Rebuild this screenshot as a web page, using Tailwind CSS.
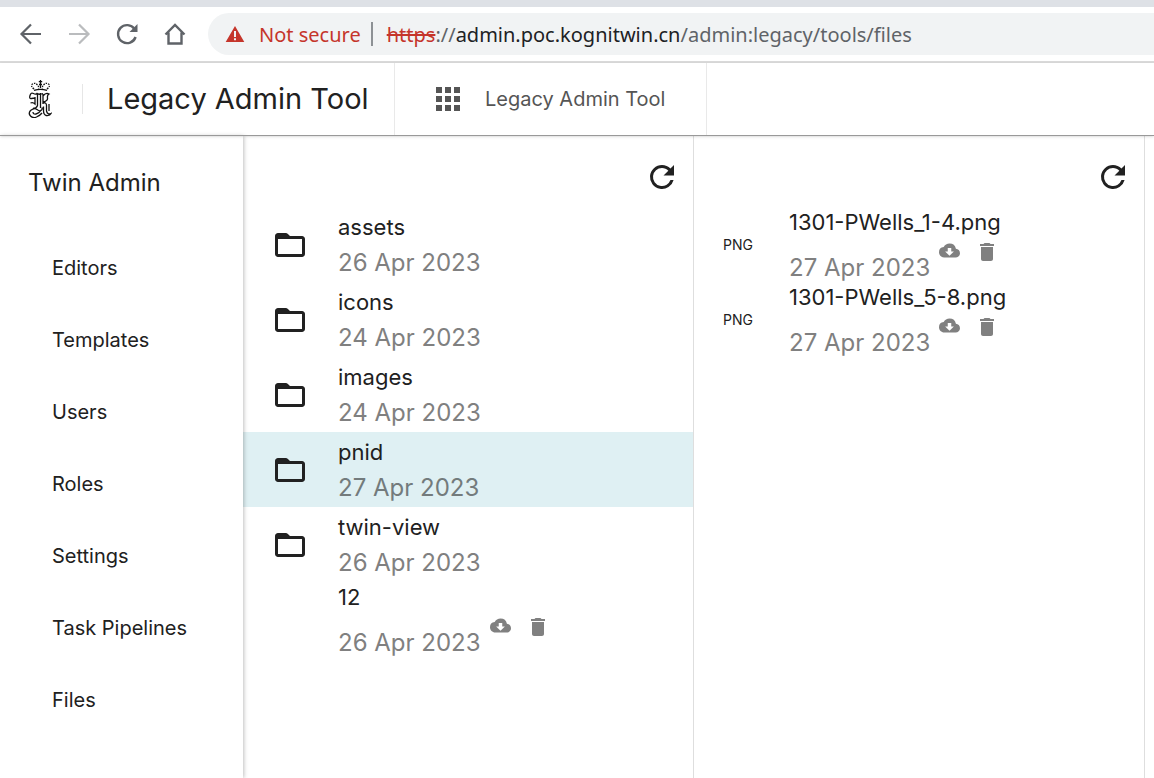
<!DOCTYPE html>
<html lang="en">
<head>
<meta charset="utf-8">
<title>Legacy Admin Tool</title>
<script src="https://cdn.jsdelivr.net/npm/@tailwindcss/browser@4"></script>
</head>
<body class="flex h-screen flex-col overflow-hidden bg-white font-['Inter',sans-serif] text-[#212121]">
<svg class="hidden" aria-hidden="true">
  <symbol id="folder" viewBox="0 0 24 24"><path fill="currentColor" d="M20 18H4V8h16m0-2h-8l-1.400-1.400C10.200 4.200 9.700 4 9.200 4H4c-1.100 0-2 .9-2 2v12c0 1.100.9 2 2 2h16c1.100 0 2-.9 2-2V8c0-1.100-.9-2-2-2z"/><path fill="currentColor" d="M3 5h7l2 2.500H3z"/></symbol>
  <symbol id="refresh" viewBox="0 0 24 24"><path fill="currentColor" d="M17.650 6.350A7.958 7.958 0 0 0 12 4a8 8 0 1 0 7.730 10h-2.080A6 6 0 1 1 12 6c1.660 0 3.140.69 4.220 1.780L13 11h7V4z"/></symbol>
  <symbol id="cloud" viewBox="0 0 24 24"><path fill="currentColor" d="M19.350 10.040A7.490 7.490 0 0 0 12 4C9.110 4 6.600 5.640 5.350 8.040A5.994 5.994 0 0 0 0 14c0 3.310 2.690 6 6 6h13c2.760 0 5-2.240 5-5 0-2.640-2.050-4.780-4.650-4.960zM17 13l-5 5-5-5h3V9h4v4z"/></symbol>
  <symbol id="trash" viewBox="0 0 24 24"><path fill="currentColor" d="M6 19c0 1.100.9 2 2 2h8c1.100 0 2-.9 2-2V7H6zM19 4h-3.500l-1-1h-5l-1 1H5v2h14z"/></symbol>
</svg>

<div class="h-[7px] shrink-0 bg-[#dee1e6]"></div>
<div class="flex h-[56px] shrink-0 items-center border-b-2 border-[#dadada] pl-[19px] text-[#5f6368]">
  <nav class="flex items-center gap-6" aria-label="Browser">
    <button aria-label="Back"><svg class="size-6" viewBox="0 0 24 24" fill="none" stroke="currentColor" stroke-width="2.200"><path d="M22 12H3M12 2.500L2.500 12l9.500 9.500"/></svg></button>
    <button aria-label="Forward" class="text-[#babcbe]"><svg class="size-6" viewBox="0 0 24 24" fill="none" stroke="currentColor" stroke-width="2.200"><path d="M2 12h19M12 2.500l9.500 9.500-9.500 9.500"/></svg></button>
    <button aria-label="Reload"><svg class="size-6" viewBox="0 0 24 24" fill="none" stroke="currentColor" stroke-width="2.400"><path d="M19.500 7A9 9 0 1 0 20.600 15"/><path fill="currentColor" stroke="none" d="M22.500 2v8h-8z"/></svg></button>
    <button aria-label="Home"><svg class="size-6" viewBox="0 0 24 24" fill="none" stroke="currentColor" stroke-width="2.400"><path d="M2.500 12.500L12 3l9.500 9.500M5.500 10.500v11h13v-11"/></svg></button>
  </nav>
  <div class="ml-[21px] flex h-[42px] flex-1 items-center rounded-l-full bg-[#f1f3f4] pl-[17px] font-['Noto_Sans',sans-serif] text-xl whitespace-nowrap">
    <svg class="h-[18px] w-5 text-[#c5352b]" viewBox="0 0 20 18" fill="currentColor" aria-hidden="true"><path fill-rule="evenodd" d="M10 1l9.300 16H.7zM9 6v6h2V6zm0 7.300v2h2v-2z"/></svg>
    <span class="ml-[14px] pt-0.5 text-[#c5352b]">Not secure</span>
    <span class="ml-2.5 h-6 w-0.5 bg-[#8d9195]"></span>
    <div role="textbox" contenteditable="true" aria-label="Address" class="ml-[14px] flex-1 pt-0.5 outline-none"><s class="text-[#c5352b]">https</s>://<span class="text-[#202124]">admin.poc.kognitwin.cn</span>/admin:legacy/tools/files</div>
  </div>
</div>

<header class="z-10 flex h-[73px] shrink-0 items-center border-b border-[#999] shadow-sm">
  <svg class="ml-[28px] h-[38px] w-6" viewBox="0 0 24 38" fill="none" stroke="#111" stroke-width="1.300" aria-label="Kognitwin">
    <path d="M6 10.300Q12.500 8.300 19 10.300"/>
    <path d="M6 9Q2 5.500 4.500 4T9 4.500Q11 6 10.500 8.500M19 9Q23 5.500 20.500 4T16 4.500Q14 6 14.500 8.500" stroke-dasharray="1.500 1"/>
    <path d="M12.500 0v8M10.800 1.700h3.400M11 4.500h3"/>
    <path d="M9.500 13q-1.500 2-4 .5T2 15.500t1.500 3 3-.5M9.500 13.500v12q-1 3-4.500 3M7 17v7q-2-2-4.500-1M12.500 13v15M15 14v10M9.500 13.500q2 1.500 5.500 0M15 16q3-4 6-2-2 1-1.500 4t-4.500 4M15 23q3-1 3.500 2v6q1 4 4.500 2.500-1 2.500-5 2-2.500-1-2.500-5v-4M21 24v7M2.500 30.500q4-3 6.500-1t4 1 1-3M2.500 30.500q-2.500 3 0 5.500t6 1q4-2 5.500-4M5 32q0 2.500 3 2t5-4"/>
  </svg>
  <div class="ml-[30px] flex h-[30px] items-center border-l border-[#e6e6e6] pl-6">
    <h1 class="w-[287px] text-[29px] leading-9 whitespace-nowrap">Legacy Admin Tool</h1>
  </div>
  <button class="flex h-full w-[313px] items-center border-x border-[#e9e9e9] pl-[41px] text-xl text-[#555] whitespace-nowrap">
    <svg class="size-6" viewBox="0 0 24 24" fill="currentColor" aria-hidden="true"><path d="M0 0h6v6H0zM9 0h6v6H9zM18 0h6v6h-6zM0 9h6v6H0zM9 9h6v6H9zM18 9h6v6h-6zM0 18h6v6H0zM9 18h6v6H9zM18 18h6v6h-6z"/></svg>
    <span class="ml-[25px]">Legacy Admin Tool</span>
  </button>
</header>

<div class="flex min-h-0 flex-1">
  <aside class="z-[1] w-[243px] shrink-0 bg-white shadow-[1px_0_4px_rgba(0,0,0,0.25)]">
    <h2 class="pt-[31px] pl-7 text-2xl leading-8">Twin Admin</h2>
    <nav class="mt-[33px] flex flex-col pl-[52px] text-xl leading-[72px]" aria-label="Twin Admin">
      <a href="#editors">Editors</a>
      <a href="#templates">Templates</a>
      <a href="#users">Users</a>
      <a href="#roles">Roles</a>
      <a href="#settings">Settings</a>
      <a href="#pipelines">Task Pipelines</a>
      <a href="#files">Files</a>
    </nav>
  </aside>

  <section class="w-[451px] shrink-0 border-r border-[#dedede]" aria-label="Folders">
    <div class="flex h-[71px] justify-end pt-[23px] pr-[13px]"><button class="size-9" aria-label="Refresh folders"><svg class="size-9"><use href="#refresh"/></svg></button></div>
    <ul class="text-[22px]">
      <li><button class="flex h-[75px] w-full items-center pl-[29px] text-left"><svg class="size-9"><use href="#folder"/></svg><span class="ml-[30px] pt-[5px]"><span class="block leading-8">assets</span><span class="block text-2xl leading-10 text-[#808080]">26 Apr 2023</span></span></button></li>
      <li><button class="flex h-[75px] w-full items-center pl-[29px] text-left"><svg class="size-9"><use href="#folder"/></svg><span class="ml-[30px] pt-[5px]"><span class="block leading-8">icons</span><span class="block text-2xl leading-10 text-[#808080]">24 Apr 2023</span></span></button></li>
      <li><button class="flex h-[75px] w-full items-center pl-[29px] text-left"><svg class="size-9"><use href="#folder"/></svg><span class="ml-[30px] pt-[5px]"><span class="block leading-8">images</span><span class="block text-2xl leading-10 text-[#808080]">24 Apr 2023</span></span></button></li>
      <li><button class="flex h-[75px] w-full items-center bg-[#dff0f3] pl-[29px] text-left"><svg class="size-9"><use href="#folder"/></svg><span class="ml-[30px] pt-[5px]"><span class="block leading-8">pnid</span><span class="block text-2xl leading-10 text-[#737b7c]">27 Apr 2023</span></span></button></li>
      <li><button class="flex h-[75px] w-full items-center pl-[29px] text-left"><svg class="size-9"><use href="#folder"/></svg><span class="ml-[30px] pt-[5px]"><span class="block leading-8">twin-view</span><span class="block text-2xl leading-10 text-[#808080]">26 Apr 2023</span></span></button></li>
      <li class="flex h-[75px] flex-col pl-[95px]">
        <span class="leading-[30px]">12</span>
        <div class="flex flex-1 items-start text-[#808080]">
          <span class="w-[146px] self-end text-2xl leading-7 whitespace-nowrap">26 Apr 2023</span>
          <button class="mt-[3px] ml-1.5" aria-label="Download 12"><svg class="size-[21px]"><use href="#cloud"/></svg></button>
          <button class="mt-[3px] ml-[15px]" aria-label="Delete 12"><svg class="size-6"><use href="#trash"/></svg></button>
        </div>
      </li>
    </ul>
  </section>

  <section class="w-[451px] shrink-0 border-r border-[#dedede]" aria-label="Files">
    <div class="flex h-[71px] justify-end pt-[23px] pr-[13px]"><button class="size-9" aria-label="Refresh files"><svg class="size-9"><use href="#refresh"/></svg></button></div>
    <ul class="text-[22px] whitespace-nowrap">
      <li class="flex h-[75px] items-center pl-[29px]">
        <span class="w-[66px] text-sm">PNG</span>
        <div class="flex h-full flex-col">
          <span class="leading-[30px]">1301-PWells_1-4.png</span>
          <div class="flex flex-1 items-start text-[#808080]">
            <span class="w-36 self-end text-2xl leading-7">27 Apr 2023</span>
            <button class="mt-[3px] ml-1.5" aria-label="Download 1301-PWells_1-4.png"><svg class="size-[21px]"><use href="#cloud"/></svg></button>
            <button class="mt-[3px] ml-[15px]" aria-label="Delete 1301-PWells_1-4.png"><svg class="size-6"><use href="#trash"/></svg></button>
          </div>
        </div>
      </li>
      <li class="flex h-[75px] items-center pl-[29px]">
        <span class="w-[66px] text-sm">PNG</span>
        <div class="flex h-full flex-col">
          <span class="leading-[30px]">1301-PWells_5-8.png</span>
          <div class="flex flex-1 items-start text-[#808080]">
            <span class="w-36 self-end text-2xl leading-7">27 Apr 2023</span>
            <button class="mt-[3px] ml-1.5" aria-label="Download 1301-PWells_5-8.png"><svg class="size-[21px]"><use href="#cloud"/></svg></button>
            <button class="mt-[3px] ml-[15px]" aria-label="Delete 1301-PWells_5-8.png"><svg class="size-6"><use href="#trash"/></svg></button>
          </div>
        </div>
      </li>
    </ul>
  </section>
</div>
</body>
</html>
